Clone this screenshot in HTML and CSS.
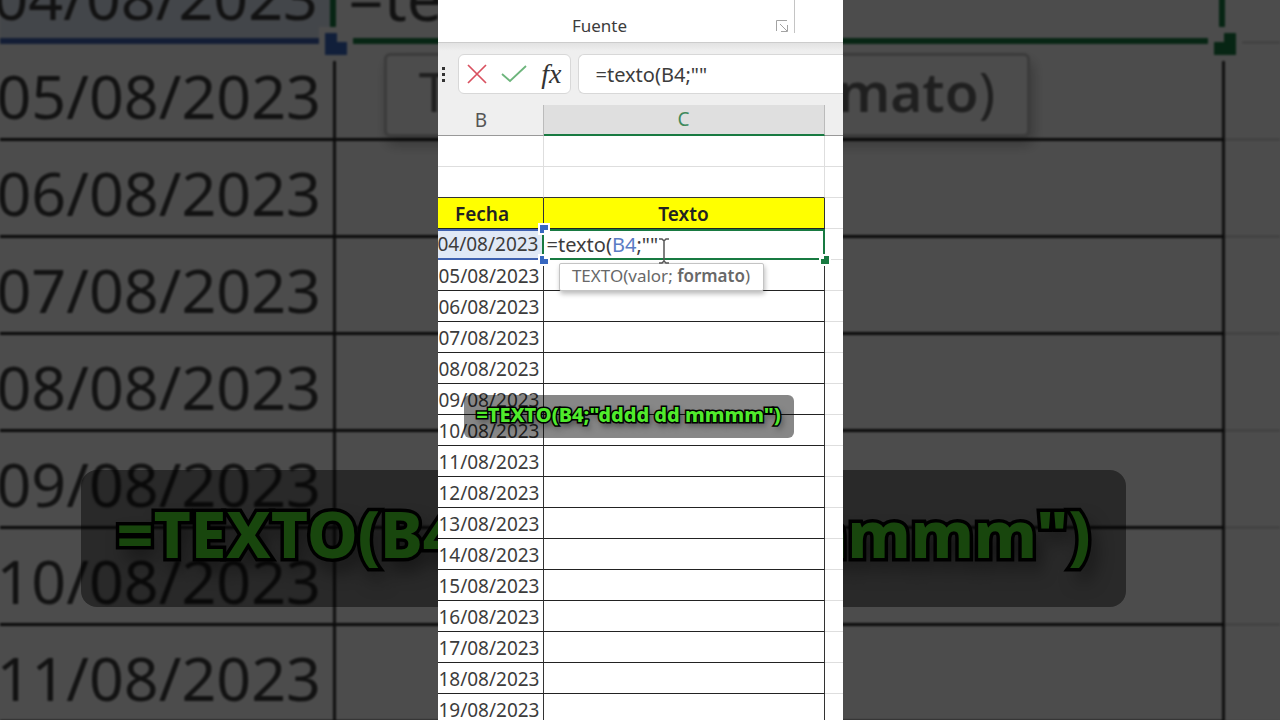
FILE: index.html
```html
<!DOCTYPE html>
<html lang="es">
<head>
<meta charset="utf-8">
<title>Función TEXTO</title>
<link rel="stylesheet" href="styles.css">
</head>
<body>
<main class="stage">
  <section class="backdrop" aria-hidden="true">
    <table class="sheet sheet-large">
      <colgroup><col class="col-b"><col class="col-c"><col></colgroup>
      <tbody>
        <tr><td class="date ref"><span>04/08/2023</span><i class="handle blue bottom"></i></td><td class="edit"><span>=texto(<b>B4</b>;""</span><i class="handle green"></i>
          <div class="tip">TEXTO(valor; <strong>formato</strong>)</div></td><td></td></tr>
        <tr><td class="date"><span>05/08/2023</span></td><td></td><td></td></tr>
        <tr><td class="date"><span>06/08/2023</span></td><td></td><td></td></tr>
        <tr><td class="date"><span>07/08/2023</span></td><td></td><td></td></tr>
        <tr><td class="date"><span>08/08/2023</span></td><td></td><td></td></tr>
        <tr><td class="date"><span>09/08/2023</span></td><td></td><td></td></tr>
        <tr><td class="date"><span>10/08/2023</span></td><td></td><td></td></tr>
        <tr><td class="date"><span>11/08/2023</span></td><td></td><td></td></tr>
      </tbody>
    </table>
    <p class="caption caption-large">=TEXTO(B4;"dddd dd mmmm")</p>
  </section>

  <section class="clip">
    <header class="ribbon">
      <span class="group">Fuente</span>
      <button class="launcher" aria-label="Configuración de fuente">
        <svg width="14" height="14" viewBox="0 0 14 14" fill="none" stroke="#a3a3a3"><path d="M1.5 12V1.5H12M5 5l7 7M12.500 6v6.500H6"/></svg>
      </button>
    </header>
    <div class="formula-bar">
      <svg class="dots" width="4" height="16" viewBox="0 0 4 16" fill="#333"><path d="M0 1h3v3H0zM0 7h3v3H0zM0 13h3v3H0z"/></svg>
      <div class="actions">
        <button aria-label="Cancelar"><svg width="20" height="20" viewBox="0 0 20 20" fill="none" stroke="#d9505f" stroke-width="1.700"><path d="M1 1l18 18M19 1L1 19"/></svg></button>
        <button aria-label="Introducir"><svg width="26" height="20" viewBox="0 0 26 20" fill="none" stroke="#6db57c" stroke-width="1.800"><path d="M1 10l8 7L25 2"/></svg></button>
        <button class="fx" aria-label="Insertar función">fx</button>
      </div>
      <input class="formula" aria-label="Barra de fórmulas" value='=texto(B4;""'>
    </div>
    <table class="sheet">
      <colgroup><col class="col-b"><col class="col-c"><col></colgroup>
      <thead><tr><th>B</th><th class="active">C</th><th></th></tr></thead>
      <tbody>
        <tr class="blank"><td></td><td></td><td></td></tr>
        <tr class="blank last"><td></td><td></td><td></td></tr>
        <tr class="titles"><td>Fecha</td><td>Texto</td><td></td></tr>
        <tr><td class="date ref"><span>04/08/2023</span><i class="handle blue top"></i><i class="handle blue bottom"></i></td><td class="edit"><span>=texto(<b>B4</b>;""</span><i class="handle green"></i>
          <svg class="cursor" width="12" height="26" viewBox="0 0 12 26" fill="none" stroke="#555" stroke-width="1.500"><path d="M1 1h3l2 2 2-2h3M6 3v20M1 25h3l2-2 2 2h3"/></svg>
          <div class="tip">TEXTO(valor; <strong>formato</strong>)</div></td><td></td></tr>
        <tr><td class="date"><span>05/08/2023</span></td><td></td><td></td></tr>
        <tr><td class="date"><span>06/08/2023</span></td><td></td><td></td></tr>
        <tr><td class="date"><span>07/08/2023</span></td><td></td><td></td></tr>
        <tr><td class="date"><span>08/08/2023</span></td><td></td><td></td></tr>
        <tr><td class="date"><span>09/08/2023</span></td><td></td><td></td></tr>
        <tr><td class="date"><span>10/08/2023</span></td><td></td><td></td></tr>
        <tr><td class="date"><span>11/08/2023</span></td><td></td><td></td></tr>
        <tr><td class="date"><span>12/08/2023</span></td><td></td><td></td></tr>
        <tr><td class="date"><span>13/08/2023</span></td><td></td><td></td></tr>
        <tr><td class="date"><span>14/08/2023</span></td><td></td><td></td></tr>
        <tr><td class="date"><span>15/08/2023</span></td><td></td><td></td></tr>
        <tr><td class="date"><span>16/08/2023</span></td><td></td><td></td></tr>
        <tr><td class="date"><span>17/08/2023</span></td><td></td><td></td></tr>
        <tr><td class="date"><span>18/08/2023</span></td><td></td><td></td></tr>
        <tr><td class="date"><span>19/08/2023</span></td><td></td><td></td></tr>
      </tbody>
    </table>
    <p class="caption">=TEXTO(B4;"dddd dd mmmm")</p>
  </section>
</main>
</body>
</html>
```
FILE: styles.css
```css
* { box-sizing: border-box; }
body { margin: 0; font-family: "Noto Sans", sans-serif; color: #3c3c3c; }
button { border: 0; padding: 0; background: none; display: grid; place-items: center; }

/* Both layers share the single grid cell of the stage. */
.stage { display: grid; grid-template: 100vh / 100%; justify-items: center; overflow: hidden; }
.backdrop, .clip { grid-area: 1 / 1; position: relative; overflow: hidden; background: #fff; }
.backdrop { width: 100%; filter: brightness(0.3); }
.clip { height: 100%; aspect-ratio: 9 / 16; }

.ribbon { height: 43px; display: grid; grid-template-columns: 1fr auto; align-items: end; padding: 0 48px 6px 0; border-bottom: 1px solid #ccc; position: relative; }
.ribbon::after { content: ""; position: absolute; right: 48px; top: 0; height: 33px; border-right: 1px solid #c4c4c4; }
.group { font-size: 17px; line-height: 20px; text-align: center; padding-left: 1px; margin-right: 14px; }
.launcher { margin: 0 6px 2px 0; height: 16px; }

.formula-bar { height: 62px; display: flex; align-items: center; gap: 7px; padding-left: 4px; background: linear-gradient(#e2e2e2, #efefef 8px); }
.dots { margin-right: 5px; }
.actions { width: 113px; height: 40px; display: flex; align-items: center; justify-content: space-between; padding: 0 8px; background: #fff; border: 1px solid #d8d8d8; border-radius: 6px; }
.fx { font: italic 28px/28px "Liberation Serif", serif; color: #333; }
.formula { flex: 1; min-width: 0; height: 40px; border: 1px solid #d8d8d8; border-right: 0; border-radius: 6px 0 0 6px; padding: 0 0 0 17px; font: 20px "Noto Sans", sans-serif; color: #3c3c3c; background: #fff; }

.sheet { --row: 31px; --line: 1px; --font: 19px; --edit-font: 20px; --pad: 3px; --nudge: 2px; --thick: 2px; --handle: 8px;
  width: 100%; table-layout: fixed; border-collapse: separate; border-spacing: 0; font-size: var(--font); line-height: 1; }
.col-b { width: 106px; }
.col-c { width: 281px; }
.sheet th { height: var(--row); padding: 0; font-weight: 400; background: #efefef; color: #555; border-bottom: 1px solid #999; border-right: 1px solid #bbb; }
.sheet th:first-child { padding-right: 18px; }
.sheet th:last-child, .sheet td:last-child { border-right: 0; }
.sheet th.active { background: #dfdfdf; color: #3f8a5c; border-bottom: 2px solid #187a41; }
.sheet td { height: var(--row); padding: var(--nudge) 0 0; white-space: nowrap; border-bottom: var(--line) solid #222; border-right: var(--line) solid #333; }
.sheet td:last-child, .sheet .blank td { border-color: #dedede; }
.sheet .last td:not(:last-child) { border-bottom-color: #333; }
.sheet .titles td { text-align: center; font-weight: 600; color: #222; }
.sheet .titles td:first-child { padding-right: 16px; }
.sheet .titles td:not(:last-child) { background: #ff0; }

.sheet .date { text-align: right; padding-right: var(--pad); }
.date span { margin-left: -30px; }
.sheet .ref { position: relative; background: #e0e9f6; border-bottom: var(--thick) solid #3f62b0; border-right: var(--thick) solid #187a41; box-shadow: inset 0 var(--thick) #3f62b0; }
.sheet .edit { position: relative; padding-left: var(--pad); font-size: var(--edit-font); border-bottom: var(--thick) solid #187a41; border-right: var(--thick) solid #187a41; box-shadow: inset 0 var(--thick) #187a41; }
.edit b { font-weight: 400; color: #5a7cc4; }

/* Range handles: a square with one quarter notched out. */
.handle { --offset: calc(var(--handle) / -2 - var(--thick)); position: absolute; right: var(--offset); width: var(--handle); height: var(--handle); z-index: 1; box-shadow: 0 0 0 var(--thick) #fff; }
.handle::after { content: ""; position: absolute; width: 45%; height: 40%; background: #fff; }
.blue { background: #3767c0; }
.blue::after { right: 0; }
.blue.top { top: calc(var(--handle) / -2); }
.blue.top::after { bottom: 0; }
.blue.bottom, .green { bottom: var(--offset); }
.blue.bottom::after { top: 0; }
.green { background: #187a41; }
.green::after { left: 0; top: 0; }
.cursor { position: absolute; left: 114px; top: 9px; z-index: 2; }

.tip { position: absolute; left: 15px; top: 34px; height: 28px; width: 205px; text-align: center; font-size: 17px; line-height: 23px; color: #686868; background: #fff; border: 1px solid #c4c4c4; border-radius: 2px; box-shadow: 1px 3px 5px #0004; }
.tip strong { font-weight: 600; }

.caption { position: absolute; left: 26px; right: 49px; top: 395px; height: 43px; margin: 0; border-radius: 6px; background: #00000078; text-align: center; white-space: nowrap;
  font-size: 20px; line-height: 40px; font-weight: 800; color: #50ea2c; -webkit-text-stroke: 3px #000; paint-order: stroke fill; text-shadow: 2px 4px 6px #0009; }

/* Enlarged, out-of-focus copy of the sheet behind the clip. */
.sheet-large { --row: 97px; --line: 3px; --font: 61px; --edit-font: 63px; --pad: 12px; --nudge: 8px; --thick: 6px; --handle: 22px; margin-top: -53px; filter: blur(1px); }
.sheet-large .col-b { width: 336px; }
.sheet-large .col-c { width: 889px; }
.sheet-large .date span { margin-left: -60px; }
.sheet-large .handle { box-shadow: 0 0 0 var(--thick) #fff; }
.sheet-large .tip { left: 48px; top: 106px; width: 646px; height: 84px; border-width: 3px; border-radius: 6px; font-size: 55px; line-height: 70px; box-shadow: 3px 8px 14px #0004; }
.caption-large { left: 81px; right: 154px; top: 470px; height: 137px; border-radius: 16px; font-size: 64px; line-height: 128px; -webkit-text-stroke-width: 7px; text-shadow: 6px 12px 18px #0009; }
```
